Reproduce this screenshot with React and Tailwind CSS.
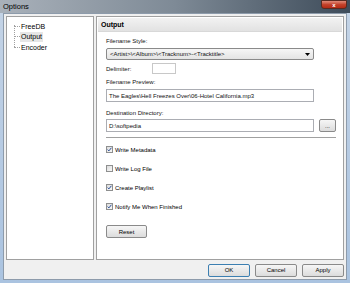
import React from "react";

const F = { fontFamily: '"Liberation Sans", Arial, sans-serif' };

function Btn({ children, w = "w-[42px]", def = false }) {
  return (
    <div
      className={`${w} h-[13px] flex items-center justify-center rounded-[2px] border ${
        def ? "border-[#3c7fb1]" : "border-[#8a8a8a]"
      } bg-gradient-to-b from-[#f6f6f6] to-[#dcdcdc] text-[6px] text-black`}
    >
      {children}
    </div>
  );
}

function Check({ checked, label }) {
  return (
    <div className="flex items-center h-[7px] gap-[2px]">
      <div className="w-[7px] h-[7px] border border-[#8e8f8f] bg-gradient-to-br from-[#dcdcdc] to-[#f8f8f8] flex items-center justify-center">
        {checked && (
          <svg width="5" height="5" viewBox="0 0 5 5">
            <path d="M0.6 2.6 L1.9 3.9 L4.4 0.8" stroke="#2a4f9a" strokeWidth="1" fill="none" />
          </svg>
        )}
      </div>
      <span className="text-[6px] text-black leading-none">{label}</span>
    </div>
  );
}

export default function App() {
  return (
    <div
      className="w-[350px] h-[283px] flex flex-col bg-gradient-to-r from-[#a9b1ba] via-[#7e8a96] to-[#3e4c5a] overflow-hidden"
      style={F}
    >
      {/* title bar */}
      <div className="h-[13px] flex items-start justify-between">
        <span className="text-[7.5px] text-black ml-[3px] mt-[3px] leading-none">Options</span>
        <div className="w-[26px] h-[9px] mr-[3px] rounded-b-[3px] bg-gradient-to-b from-[#e08a78] via-[#c4422b] to-[#b32a14] border border-[#5a2a20] flex items-center justify-center">
          <span className="text-[6px] text-white font-bold leading-none">x</span>
        </div>
      </div>
      {/* frame */}
      <div className="flex-1 flex flex-col px-[3px] pb-[3px] bg-gradient-to-b from-[#c3d3e6] to-[#aac3e0]">
        <div className="flex-1 bg-[#f0f0f0] flex flex-col px-[2px] pt-[2px] border border-[#8d9bab]">
          <div className="flex gap-[2px] h-[244px]">
            {/* tree */}
            <div className="w-[88px] bg-white border border-[#a0a0a0] relative">
              <div className="absolute left-[7px] top-[8px] h-[22px] border-l border-dotted border-[#a0a0a0]" />
              <div className="flex flex-col pt-[4px] pl-[7px] text-[7px] text-black">
                {["FreeDB", "Output", "Encoder"].map((t) => (
                  <div key={t} className="flex items-center h-[10.5px]">
                    <div className="w-[6px] border-t border-dotted border-[#a0a0a0]" />
                    <span className={`px-[1px] leading-none py-[1.5px] ${t === "Output" ? "bg-[#e6e6e6]" : ""}`}>{t}</span>
                  </div>
                ))}
              </div>
            </div>
            {/* right panel */}
            <div className="flex-1 bg-white border border-[#a0a0a0] flex flex-col p-[1px]">
              <div className="h-[14px] bg-gradient-to-b from-[#f2f2f2] to-[#e2e2e2] border-b border-[#d8d8d8] flex items-center pl-[3px]">
                <span className="text-[7px] font-bold text-black leading-none">Output</span>
              </div>
              <div className="flex flex-col pl-[8px] pr-[6px] text-[6px] text-[#111] leading-none">
                <div className="mt-[6px]">Filename Style:</div>
                <div className="mt-[4px] w-[208px] h-[12px] border border-[#8a8a8a] rounded-[2px] bg-gradient-to-b from-[#f6f6f6] to-[#e4e4e4] flex items-center justify-between px-[3px]">
                  <span>&lt;Artist&gt;\&lt;Album&gt;\&lt;Tracknum&gt;-&lt;Tracktitle&gt;</span>
                  <svg width="5" height="3" viewBox="0 0 5 3"><path d="M0 0 H5 L2.5 3 Z" fill="#000" /></svg>
                </div>
                <div className="mt-[3px] flex items-center h-[11px]">
                  <span className="w-[46px]">Delimiter:</span>
                  <div className="w-[24px] h-[11px] border border-[#c8c8c8] bg-white" />
                </div>
                <div className="mt-[5px]">Filename Preview:</div>
                <div className="mt-[4px] w-[208px] h-[13px] border border-[#abadb3] bg-white flex items-center px-[2px]">
                  The Eagles\Hell Freezes Over\06-Hotel California.mp3
                </div>
                <div className="mt-[8px]">Destination Directory:</div>
                <div className="mt-[3px] flex items-center gap-[5px]">
                  <div className="w-[208px] h-[13px] border border-[#abadb3] bg-white flex items-center px-[2px]">D:\softpedia</div>
                  <Btn w="w-[17px]">...</Btn>
                </div>
                <div className="mt-[5px] w-[230px] border-t border-[#a0a0a0] border-b border-b-white h-[2px]" />
                <div className="mt-[7px] flex flex-col gap-[12px]">
                  <Check checked label="Write Metadata" />
                  <Check label="Write Log File" />
                  <Check checked label="Create Playlist" />
                  <Check checked label="Notify Me When Finished" />
                </div>
                <div className="mt-[15px]">
                  <Btn w="w-[41px]">Reset</Btn>
                </div>
              </div>
            </div>
          </div>
          <div className="flex justify-end gap-[5px] mt-[4px]">
            <Btn def>OK</Btn>
            <Btn>Cancel</Btn>
            <Btn>Apply</Btn>
          </div>
        </div>
      </div>
    </div>
  );
}
